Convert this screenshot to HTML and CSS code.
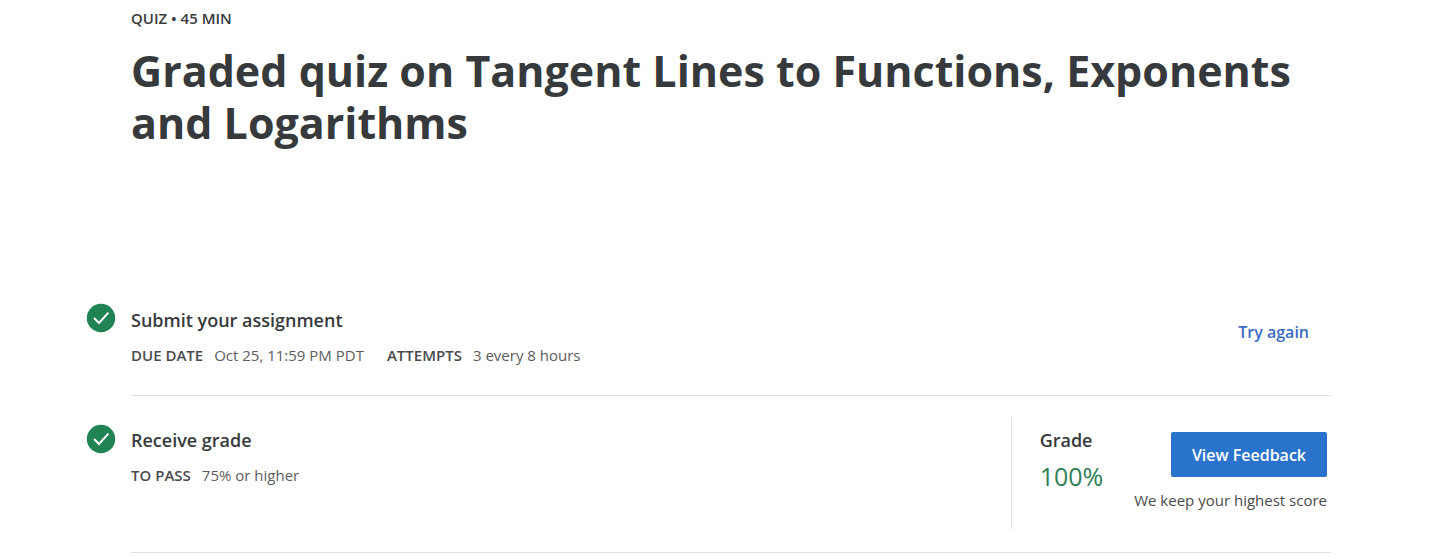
FILE: index.html
```html
<!DOCTYPE html>
<html lang="en">
<head>
<meta charset="utf-8">
<title>Graded quiz</title>
<link rel="stylesheet" href="styles.css">
</head>
<body>
<main class="page">
  <header class="header">
    <p class="kicker">QUIZ • 45 MIN</p>
    <h1 class="title">Graded quiz on Tangent Lines to Functions, Exponents and Logarithms</h1>
  </header>
  <section class="step">
    <svg class="check" viewBox="0 0 30 30" aria-hidden="true"><circle cx="15" cy="15" r="14.2" fill="#1f8354"/><path d="M8 15l5 5L22.4 9.6" fill="none" stroke="#fff" stroke-width="2"/></svg>
    <div class="info">
      <h2 class="heading">Submit your assignment</h2>
      <dl class="facts">
        <div class="fact"><dt>DUE DATE</dt><dd>Oct 25, 11:59 PM PDT</dd></div>
        <div class="fact"><dt>ATTEMPTS</dt><dd>3 every 8 hours</dd></div>
      </dl>
    </div>
    <button class="try" type="button">Try again</button>
  </section>
  <section class="step step-grade">
    <svg class="check" viewBox="0 0 30 30" aria-hidden="true"><circle cx="15" cy="15" r="14.2" fill="#1f8354"/><path d="M8 15l5 5L22.4 9.6" fill="none" stroke="#fff" stroke-width="2"/></svg>
    <div class="info">
      <h2 class="heading">Receive grade</h2>
      <dl class="facts">
        <div class="fact"><dt>TO PASS</dt><dd>75% or higher</dd></div>
      </dl>
    </div>
    <div class="result">
      <div class="grade">
        <h2 class="heading">Grade</h2>
        <p class="score">100%</p>
      </div>
      <div class="feedback">
        <button class="view" type="button">View Feedback</button>
        <p class="note">We keep your highest score</p>
      </div>
    </div>
  </section>
</main>
</body>
</html>
```
FILE: styles.css
```css
* { box-sizing: border-box; }
body { margin: 0; background: #fff; color: #373a3c; font-family: "Open Sans", sans-serif; }
h1, h2, p, dl, dd { margin: 0; }
button { font: inherit; cursor: pointer; border: 0; }
.page { padding: 8px 125px 0 131px; }
.kicker { font-size: 15px; line-height: 20px; font-weight: 600; }
.title { margin-top: 17px; font-size: 43px; line-height: 52px; font-weight: 700; }
.header { margin-bottom: 133px; }
.step { position: relative; display: flex; justify-content: space-between; padding: 26px 0 29px; border-bottom: 1px solid #e1e1e1; }
.check { position: absolute; left: -45px; top: 21px; width: 30px; height: 30px; }
.heading { font-size: 18px; line-height: 24px; font-weight: 600; }
.facts { display: flex; gap: 23px; margin-top: 12px; font-size: 15px; line-height: 22px; }
.fact { display: flex; gap: 11px; }
.fact dt { font-weight: 600; color: #4a4a4a; }
.fact dd { color: #5c5c5c; font-weight: 400; }
.try { align-self: flex-start; padding: 0; margin: 12px 22px 0 0; background: none; color: #3a6dc2; font-size: 16px; font-weight: 600; line-height: 24px; }
.step-grade { padding: 21px 0 23px; }
.step-grade .check { top: 28px; }
.step-grade .info { padding-top: 11px; }
.result { display: flex; gap: 31px; padding: 11px 4px 18px 28px; border-left: 1px solid #e1e1e1; }
.score { margin-top: 7px; font-size: 25px; line-height: 34px; color: #2f8057; }
.feedback { display: flex; flex-direction: column; align-items: flex-end; padding-top: 4px; }
.view { padding: 0 21px; height: 45px; border-radius: 2px; background: #2a73cc; color: #fff; font-size: 16px; font-weight: 600; }
.note { margin-top: 12px; font-size: 15px; line-height: 22px; color: #4a4a4a; }
```
